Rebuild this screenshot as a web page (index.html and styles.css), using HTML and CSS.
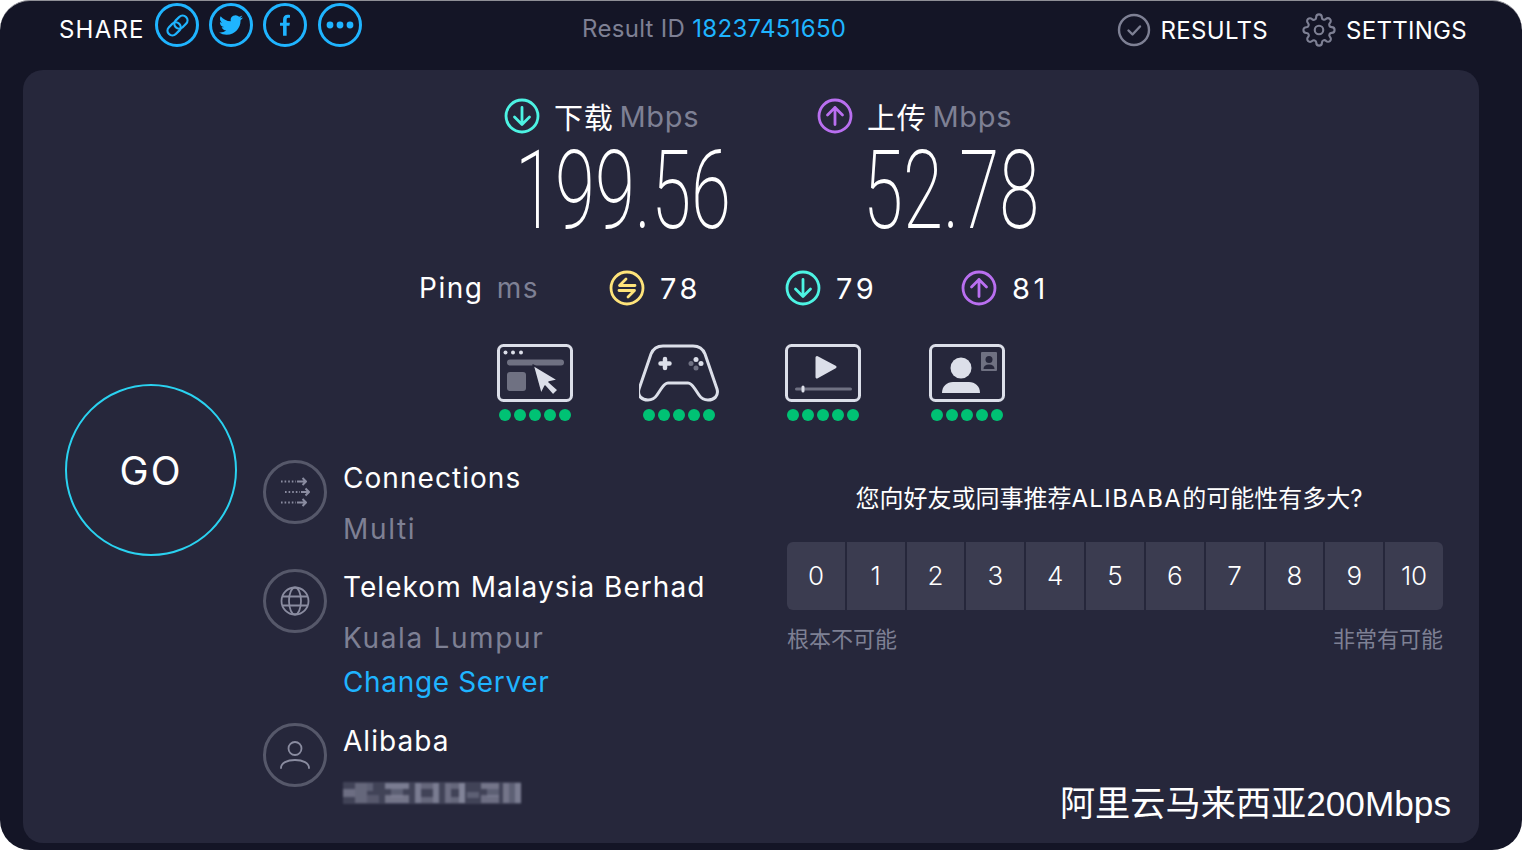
FILE: index.html
```html
<!DOCTYPE html>
<html lang="en">
  <head>
    <meta charset="UTF-8" />
    <meta name="viewport" content="width=device-width, initial-scale=1.0" />
    <title>Speedtest Result</title>
    <link rel="stylesheet" href="styles.css">
  </head>
  <body>
    <div class="shell">
      <header class="topbar">
        <div class="share">
          <span class="share-label">SHARE</span>
          <span class="share-btn">
            <svg viewBox="0 0 24 24" width="29" height="29" fill="none" stroke="currentColor" stroke-width="1.9"><g transform="rotate(-45 12 12)"><rect x="2" y="8" width="12" height="8" rx="4"/><rect x="10" y="8" width="12" height="8" rx="4"/></g></svg>
          </span>
          <span class="share-btn">
            <svg viewBox="0 0 24 24" width="24" height="24" fill="currentColor"><path d="M23.953 4.57a10 10 0 01-2.825.775 4.958 4.958 0 002.163-2.723c-.951.555-2.005.959-3.127 1.184a4.92 4.92 0 00-8.384 4.482C7.69 8.095 4.067 6.13 1.64 3.162a4.822 4.822 0 00-.666 2.475c0 1.71.87 3.213 2.188 4.096a4.904 4.904 0 01-2.228-.616v.06a4.923 4.923 0 003.946 4.827 4.996 4.996 0 01-2.212.085 4.936 4.936 0 004.604 3.417 9.867 9.867 0 01-6.102 2.105c-.39 0-.779-.023-1.17-.067a13.995 13.995 0 007.557 2.209c9.053 0 13.998-7.496 13.998-13.985 0-.21 0-.42-.015-.63A9.935 9.935 0 0024 4.59z"/></svg>
          </span>
          <span class="share-btn">
            <svg viewBox="0 0 24 24" width="26" height="26" fill="currentColor"><path d="M10.2 22v-9.2H7.4V10h2.8V7.2c0-3 1.7-4.6 4.2-4.6.9 0 1.7.1 2.2.2v2.5h-1.4c-1.4 0-1.7.8-1.7 1.8V10h3l-.4 2.8h-2.6V22z"/></svg>
          </span>
          <span class="share-btn share-more">
            <svg viewBox="0 0 28 10" width="28" height="10" fill="currentColor"><circle cx="4" cy="5" r="3.4"/><circle cx="14" cy="5" r="3.4"/><circle cx="24" cy="5" r="3.4"/></svg>
          </span>
        </div>
        <div class="result-id">Result ID <a class="result-link">18237451650</a></div>
        <nav class="nav">
          <span class="nav-item">
            <svg viewBox="0 0 34 34" width="34" height="34" fill="none" stroke="#7e8094" stroke-width="2.4" stroke-linecap="round" stroke-linejoin="round"><circle cx="17" cy="17" r="15"/><path d="M11.5 17.5l4 4 7.5-8"/></svg>
            RESULTS
          </span>
          <span class="nav-item">
            <svg viewBox="0 0 24 24" width="34" height="34" fill="none" stroke="#7e8094" stroke-width="1.5" stroke-linecap="round" stroke-linejoin="round"><circle cx="12" cy="12" r="3"/><path d="M19.4 15a1.65 1.65 0 0 0 .33 1.82l.06.06a2 2 0 0 1 0 2.83 2 2 0 0 1-2.83 0l-.06-.06a1.65 1.65 0 0 0-1.82-.33 1.65 1.65 0 0 0-1 1.51V21a2 2 0 0 1-2 2 2 2 0 0 1-2-2v-.09A1.65 1.65 0 0 0 9 19.4a1.65 1.65 0 0 0-1.82.33l-.06.06a2 2 0 0 1-2.83 0 2 2 0 0 1 0-2.83l.06-.06a1.65 1.65 0 0 0 .33-1.82 1.65 1.65 0 0 0-1.51-1H3a2 2 0 0 1-2-2 2 2 0 0 1 2-2h.09A1.65 1.65 0 0 0 4.6 9a1.65 1.65 0 0 0-.33-1.82l-.06-.06a2 2 0 0 1 0-2.83 2 2 0 0 1 2.83 0l.06.06a1.65 1.65 0 0 0 1.82.33H9a1.65 1.65 0 0 0 1-1.51V3a2 2 0 0 1 2-2 2 2 0 0 1 2 2v.09a1.65 1.65 0 0 0 1 1.51 1.65 1.65 0 0 0 1.82-.33l.06-.06a2 2 0 0 1 2.83 0 2 2 0 0 1 0 2.83l-.06.06a1.65 1.65 0 0 0-.33 1.82V9a1.65 1.65 0 0 0 1.51 1H21a2 2 0 0 1 2 2 2 2 0 0 1-2 2h-.09a1.65 1.65 0 0 0-1.51 1z"/></svg>
            SETTINGS
          </span>
        </nav>
      </header>

      <main class="panel">
        <div class="go-col">
          <div class="go-btn">GO</div>
        </div>

        <div class="main-col">
          <div class="speeds">
            <div class="speed speed-down">
              <div class="speed-label">
                <svg class="stat-icon" viewBox="0 0 36 36" fill="none" stroke="#4df3e3" stroke-width="2.8" stroke-linecap="round" stroke-linejoin="round"><circle cx="18" cy="18" r="16"/><path d="M18 9.5v17M10.5 19l7.5 7.5 7.5-7.5"/></svg>
                <span class="speed-name">下载</span> <span class="muted">Mbps</span>
              </div>
              <div class="speed-value">199.56</div>
            </div>
            <div class="speed speed-up">
              <div class="speed-label">
                <svg class="stat-icon" viewBox="0 0 36 36" fill="none" stroke="#b96ff0" stroke-width="2.8" stroke-linecap="round" stroke-linejoin="round"><circle cx="18" cy="18" r="16"/><path d="M18 26.5v-17M10.5 17l7.5-7.5 7.5 7.5"/></svg>
                <span class="speed-name">上传</span> <span class="muted">Mbps</span>
              </div>
              <div class="speed-value">52.78</div>
            </div>
          </div>

          <div class="ping">
            <div class="ping-label">Ping <span class="muted ping-unit">ms</span></div>
            <div class="ping-item">
              <svg class="stat-icon" viewBox="0 0 36 36" fill="none" stroke="#ffe47a" stroke-width="2.8" stroke-linecap="round" stroke-linejoin="round"><circle cx="18" cy="18" r="16"/><path d="M26 15.5H10.5l6.5-6.5M10 20.5h15.5l-6.5 6.5"/></svg>
              <span class="ping-num">78</span>
            </div>
            <div class="ping-item">
              <svg class="stat-icon" viewBox="0 0 36 36" fill="none" stroke="#4df3e3" stroke-width="2.8" stroke-linecap="round" stroke-linejoin="round"><circle cx="18" cy="18" r="16"/><path d="M18 9.5v17M10.5 19l7.5 7.5 7.5-7.5"/></svg>
              <span class="ping-num">79</span>
            </div>
            <div class="ping-item">
              <svg class="stat-icon" viewBox="0 0 36 36" fill="none" stroke="#b96ff0" stroke-width="2.8" stroke-linecap="round" stroke-linejoin="round"><circle cx="18" cy="18" r="16"/><path d="M18 26.5v-17M10.5 17l7.5-7.5 7.5 7.5"/></svg>
              <span class="ping-num">81</span>
            </div>
          </div>

          <div class="activities">
            <div class="activity">
              <svg viewBox="0 0 76 58" width="76" height="58" fill="none">
                <rect x="1.5" y="1.5" width="73" height="55" rx="5" stroke="#dcdfe9" stroke-width="3"/>
                <g fill="#dcdfe9"><circle cx="8.5" cy="8.5" r="2"/><circle cx="16" cy="8.5" r="2"/><circle cx="24" cy="8.5" r="2"/></g>
                <rect x="10" y="15.5" width="57" height="6" rx="3" fill="#6f7182"/>
                <rect x="10" y="28" width="19" height="19" rx="3" fill="#6f7182"/>
                <path d="M36 21l25 15-9 2 9 8-5 5-8-9-4 8z" fill="#dcdfe9" stroke="#26273b" stroke-width="1.5" stroke-linejoin="round"/>
              </svg>
              <div class="dots"><i></i><i></i><i></i><i></i><i></i></div>
            </div>
            <div class="activity">
              <svg viewBox="0 0 80 58" width="80" height="58" fill="none">
                <path d="M27 2h26c6 0 10 3 12 8l12 35c2 7-3 11-9 11-4 0-7-2-9-5l-4-6c-2-3-4-6-7-6H28c-3 0-5 3-7 6l-4 6c-2 3-5 5-9 5-6 0-11-4-9-11L11 10c2-5 6-8 12-8z" transform="translate(1 0)" stroke="#dcdfe9" stroke-width="3" stroke-linejoin="round"/>
                <path d="M26 15v9M21.5 19.5h9" stroke="#dcdfe9" stroke-width="4.5" stroke-linecap="round"/>
                <circle cx="57" cy="15.5" r="2.5" fill="#dcdfe9"/>
                <circle cx="62" cy="19.5" r="2.5" fill="#dcdfe9"/>
                <circle cx="52" cy="19.5" r="2.5" fill="#6f7182"/>
                <circle cx="57" cy="24" r="2.5" fill="#6f7182"/>
              </svg>
              <div class="dots"><i></i><i></i><i></i><i></i><i></i></div>
            </div>
            <div class="activity">
              <svg viewBox="0 0 76 58" width="76" height="58" fill="none">
                <rect x="1.5" y="1.5" width="73" height="55" rx="5" stroke="#dcdfe9" stroke-width="3"/>
                <path d="M32 13.5l18 9.5-18 10z" fill="#dcdfe9" stroke="#dcdfe9" stroke-width="3" stroke-linejoin="round"/>
                <rect x="10" y="43.5" width="57" height="3" rx="1.5" fill="#6f7182"/>
                <rect x="16.5" y="41.5" width="3" height="7" rx="1.5" fill="#dcdfe9"/>
              </svg>
              <div class="dots"><i></i><i></i><i></i><i></i><i></i></div>
            </div>
            <div class="activity">
              <svg viewBox="0 0 76 58" width="76" height="58" fill="none">
                <rect x="1.5" y="1.5" width="73" height="55" rx="5" stroke="#dcdfe9" stroke-width="3"/>
                <circle cx="32" cy="24" r="10.5" fill="#dcdfe9"/>
                <path d="M13 49c0-7 5-11 11-11h16c6 0 11 4 11 11z" fill="#dcdfe9"/>
                <rect x="52" y="8" width="16" height="19" rx="1" fill="#6f7182"/>
                <circle cx="60" cy="15.5" r="3.5" fill="#26273b"/>
                <path d="M54.5 25c0-3 2-4.5 5.5-4.5s5.5 1.5 5.5 4.5z" fill="#26273b"/>
              </svg>
              <div class="dots"><i></i><i></i><i></i><i></i><i></i></div>
            </div>
          </div>

          <div class="lower">
            <div class="info-list">
              <div class="info-row">
                <span class="info-icon">
                  <svg viewBox="0 0 30 30" width="30" height="30" fill="none" stroke="#8a8ca0" stroke-width="2" stroke-linejoin="round">
                    <path d="M1 4.5h15M5 15h15M1 25.5h15" stroke-dasharray="1.6 2"/>
                    <path d="M17 4.5h9M22.5 1l3.5 3.5-3.5 3.5M21 15h8M25.5 11.5l3.5 3.5-3.5 3.5M17 25.5h9M22.5 22l3.5 3.5-3.5 3.5"/>
                  </svg>
                </span>
                <div class="info-text">
                  <div class="info-title">Connections</div>
                  <div class="info-sub">Multi</div>
                </div>
              </div>
              <div class="info-row">
                <span class="info-icon">
                  <svg viewBox="0 0 30 30" width="30" height="30" fill="none" stroke="#8a8ca0" stroke-width="1.8"><circle cx="15" cy="15" r="13.5"/><ellipse cx="15" cy="15" rx="6" ry="13.5"/><path d="M2.5 10.5h25M2.5 19.5h25"/></svg>
                </span>
                <div class="info-text">
                  <div class="info-title">Telekom Malaysia Berhad</div>
                  <div class="info-sub">Kuala Lumpur</div>
                  <a class="info-link">Change Server</a>
                </div>
              </div>
              <div class="info-row">
                <span class="info-icon">
                  <svg viewBox="0 0 30 30" width="30" height="30" fill="none" stroke="#8a8ca0" stroke-width="1.8" stroke-linecap="round"><circle cx="15" cy="8.5" r="6.5"/><path d="M1 28c0-5 6-8 14-8s14 3 14 8"/></svg>
                </span>
                <div class="info-text">
                  <div class="info-title">Alibaba</div>
                  <svg class="ip-blur" viewBox="0 0 180 26" width="180" height="26">
                    <g fill="#8a8ca0">
                      <rect x="0" y="2" width="178" height="22" opacity=".28"/>
                      <rect x="0" y="9" width="12" height="8" opacity=".6"/><rect x="12" y="3" width="12" height="20" opacity=".5"/>
                      <rect x="24" y="3" width="6" height="8" opacity=".4"/><rect x="24" y="15" width="12" height="8" opacity=".3"/>
                      <rect x="42" y="3" width="24" height="6" opacity=".8"/><rect x="48" y="9" width="12" height="8" opacity=".4"/><rect x="42" y="15" width="24" height="8" opacity=".7"/>
                      <rect x="72" y="3" width="6" height="20" opacity=".8"/><rect x="78" y="3" width="12" height="6" opacity=".5"/><rect x="78" y="17" width="12" height="6" opacity=".5"/><rect x="90" y="3" width="6" height="20" opacity=".8"/>
                      <rect x="102" y="3" width="6" height="20" opacity=".6"/><rect x="108" y="3" width="8" height="6" opacity=".5"/><rect x="108" y="17" width="8" height="6" opacity=".5"/><rect x="116" y="3" width="6" height="20" opacity=".9"/>
                      <rect x="124" y="12" width="12" height="6" opacity=".4"/>
                      <rect x="138" y="3" width="18" height="6" opacity=".7"/><rect x="144" y="9" width="12" height="8" opacity=".4"/><rect x="138" y="15" width="18" height="8" opacity=".6"/>
                      <rect x="160" y="3" width="6" height="20" opacity=".7"/><rect x="166" y="3" width="6" height="20" opacity=".4"/><rect x="172" y="3" width="6" height="20" opacity=".8"/>
                    </g>
                  </svg>
                </div>
              </div>
            </div>

            <section class="survey">
              <h2 class="survey-title">您向好友或同事推荐<span class="survey-brand">ALIBABA</span>的可能性有多大?</h2>
              <div class="scale">
                <span>0</span><span>1</span><span>2</span><span>3</span><span>4</span><span>5</span><span>6</span><span>7</span><span>8</span><span>9</span><span>10</span>
              </div>
              <div class="scale-labels">
                <span>根本不可能</span>
                <span>非常有可能</span>
              </div>
            </section>
          </div>
        </div>

        <div class="watermark">阿里云马来西亚200Mbps</div>
      </main>
    </div>
  </body>
</html>
```

FILE: styles.css
```css
* {
  box-sizing: border-box;
}

html,
body {
  margin: 0;
  height: 100%;
  background-color: #fff;
  overflow: hidden;
}

body {
  font-family: Inter, "Noto Sans CJK SC", sans-serif;
  color: #fff;
}

.shell {
  height: 850px;
  background-color: #141526;
  border-top: 1px solid #8f8f96;
  border-radius: 30px;
  padding: 0 43px 7px 23px;
  display: flex;
  flex-direction: column;
}

.topbar {
  height: 69px;
  display: flex;
  align-items: flex-start;
  padding-left: 36px;
  font-size: 24px;
}

.share {
  display: flex;
  align-items: center;
  height: 48px;
}

.share-label {
  width: 96px;
  margin-top: 8px;
  letter-spacing: 1.2px;
}

.share-btn {
  width: 44px;
  height: 44px;
  margin-right: 10px;
  border: 3px solid #1fb4ff;
  border-radius: 50%;
  color: #1fb4ff;
  display: flex;
  align-items: center;
  justify-content: center;
}

.share-more {
  margin-left: 1px;
}

.result-id {
  margin-left: 210px;
  margin-top: 13px;
  color: #7e8094;
  letter-spacing: 0.3px;
}

.result-link {
  color: #1fb4ff;
}

.nav {
  margin-left: auto;
  margin-right: 12px;
  margin-top: 12px;
  display: flex;
  gap: 34px;
  letter-spacing: 0.3px;
}

.nav-item {
  display: flex;
  align-items: center;
  gap: 10px;
  height: 34px;
}

.panel {
  position: relative;
  flex: 1;
  display: flex;
  background-color: #26273b;
  border-radius: 20px;
}

.go-col {
  width: 240px;
  padding: 314px 0 0 42px;
}

.go-btn {
  width: 172px;
  height: 172px;
  border: 2px solid #2ad2f0;
  border-radius: 50%;
  display: flex;
  align-items: center;
  justify-content: center;
  font-size: 39px;
  letter-spacing: 2px;
}

.main-col {
  flex: 1;
  padding-top: 28px;
}

.muted {
  color: #7e8094;
}

.speeds {
  display: flex;
  margin-left: 241px;
  height: 172px;
}

.speed {
  width: 313px;
}

.speed-label {
  display: flex;
  align-items: center;
  height: 36px;
  font-size: 29px;
  gap: 6px;
  letter-spacing: 0.7px;
}

.speed-name {
  margin-left: 8px;
}

.stat-icon {
  width: 36px;
  height: 36px;
}

.speed-value {
  margin-top: 1px;
  font-family: Roboto, sans-serif;
  font-weight: 200;
  font-size: 110px;
  line-height: 112px;
  white-space: nowrap;
  transform: scaleX(0.66);
  transform-origin: left top;
}

.speed-down .speed-value {
  margin-left: 11px;
}

.speed-up .speed-value {
  margin-left: 46px;
}

.ping {
  display: flex;
  align-items: center;
  height: 36px;
  margin-left: 156px;
  font-size: 28px;
  letter-spacing: 1.5px;
}

.ping-label {
  width: 190px;
}

.ping-unit {
  margin-left: 4px;
}

.ping-item {
  width: 176px;
  display: flex;
  align-items: center;
  gap: 15px;
}

.ping-num {
  font-size: 29px;
  letter-spacing: 3.5px;
}

.activities {
  display: flex;
  margin: 38px 0 0 200px;
}

.activity {
  width: 144px;
  display: flex;
  flex-direction: column;
  align-items: center;
}

.dots {
  display: flex;
  gap: 3px;
  margin-top: 7px;
}

.dots i {
  width: 12px;
  height: 12px;
  border-radius: 50%;
  background-color: #00c274;
}

.lower {
  display: flex;
  margin-top: 39px;
}

.info-list {
  width: 524px;
  display: flex;
  flex-direction: column;
  gap: 22px;
}

.info-row {
  display: flex;
  gap: 16px;
}

.info-icon {
  width: 64px;
  height: 64px;
  flex-shrink: 0;
  border: 3px solid #56586a;
  border-radius: 50%;
  display: flex;
  align-items: center;
  justify-content: center;
}

.info-title {
  font-size: 28px;
  line-height: 36px;
  letter-spacing: 1.05px;
}

.info-sub {
  font-size: 28px;
  line-height: 36px;
  margin-top: 15px;
  color: #7e8094;
  letter-spacing: 1.65px;
}

.info-link {
  display: block;
  font-size: 28px;
  line-height: 36px;
  margin-top: 8px;
  margin-bottom: 1px;
  color: #1fb4ff;
  letter-spacing: 0.65px;
}

.ip-blur {
  display: block;
  margin-top: 21px;
  filter: blur(1.2px);
}

.survey {
  width: 656px;
  padding-top: 23px;
}

.survey-title {
  margin: 0;
  padding-right: 12px;
  font-size: 24px;
  line-height: 32px;
  font-weight: 400;
  text-align: center;
}

.survey-brand {
  letter-spacing: 1.4px;
}

.scale {
  display: flex;
  gap: 2px;
  margin-top: 27px;
  height: 68px;
  border-radius: 6px;
  overflow: hidden;
}

.scale span {
  flex: 1;
  padding-bottom: 2px;
  background-color: #3b3c50;
  display: flex;
  align-items: center;
  justify-content: center;
  font-size: 26px;
  font-weight: 300;
}

.scale-labels {
  display: flex;
  justify-content: space-between;
  margin-top: 13px;
  font-size: 22px;
  line-height: 32px;
  color: #7e8094;
}

.watermark {
  position: absolute;
  right: 28px;
  bottom: 17px;
  font-family: "Liberation Sans", "Noto Sans CJK SC", sans-serif;
  font-size: 35.2px;
  line-height: 44px;
  color: #fff;
}
```
